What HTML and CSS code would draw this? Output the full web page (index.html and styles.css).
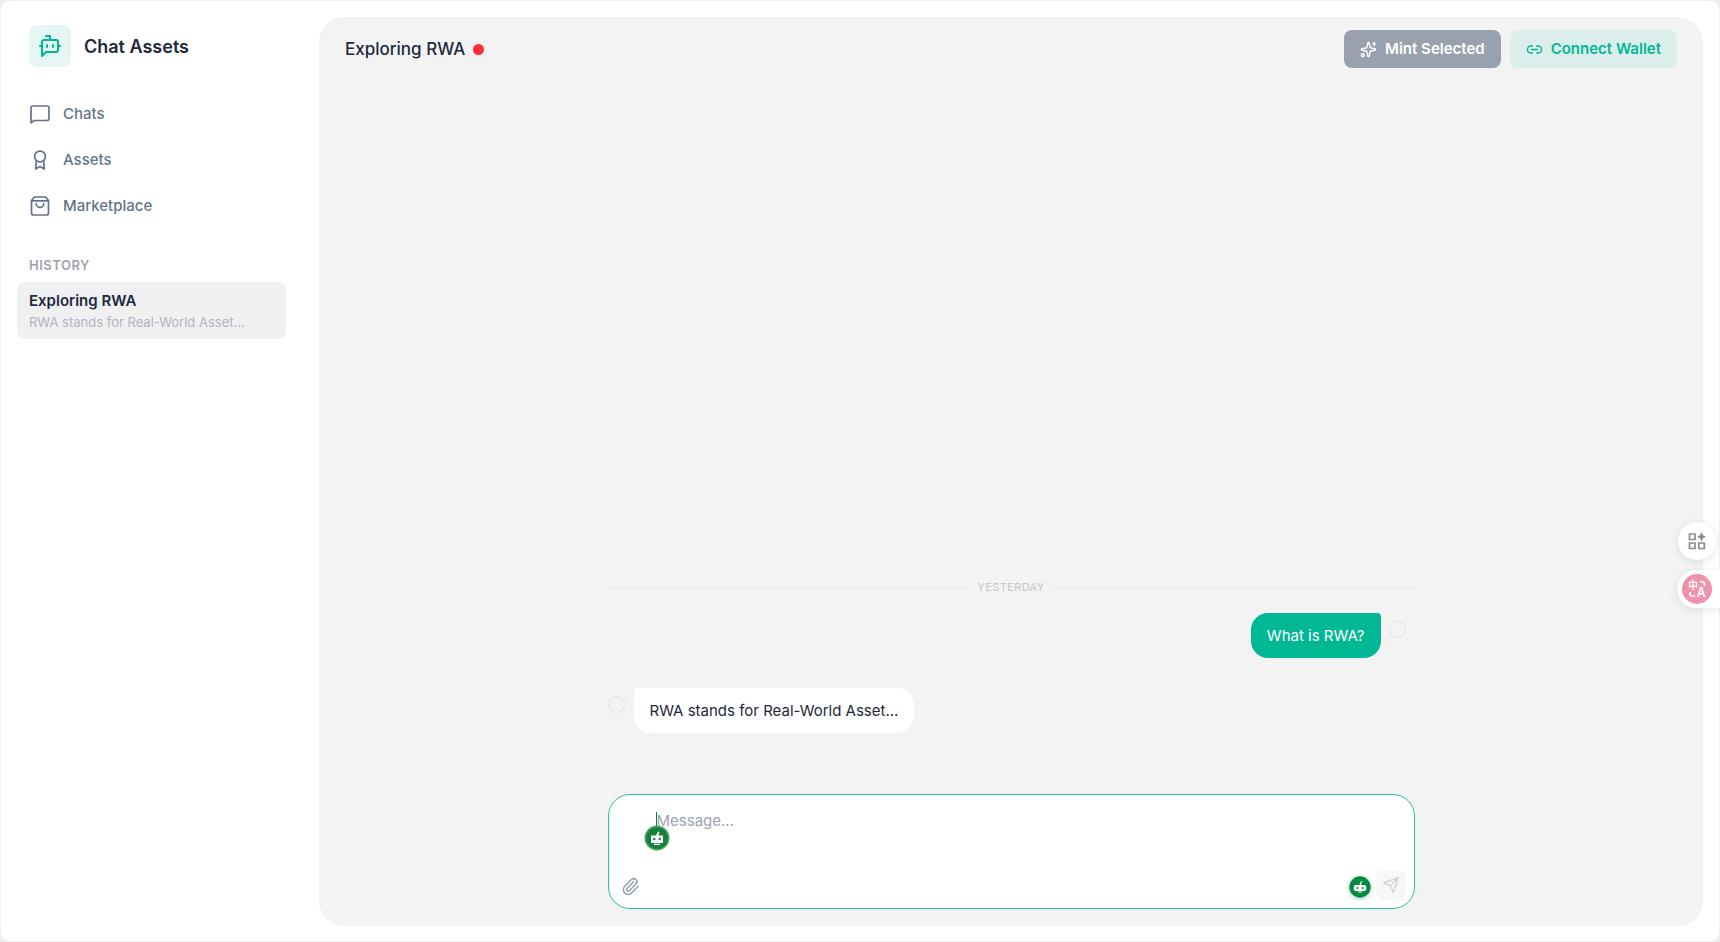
FILE: index.html
```html
<!DOCTYPE html>
<html lang="en">
<head>
<meta charset="utf-8">
<title>Chat Assets</title>
<link rel="stylesheet" href="styles.css">
</head>
<body>
<div class="app">
  <aside class="sidebar">
    <div class="brand">
      <span class="brand-tile">
        <svg class="icon" width="24" height="24" viewBox="0 0 24 24"><path d="M12 6V2H8"/><path d="m8 18-4 4V8a2 2 0 0 1 2-2h12a2 2 0 0 1 2 2v8a2 2 0 0 1-2 2Z"/><path d="M2 12h2M9 11v2M15 11v2M20 12h2"/></svg>
      </span>
      <span class="brand-name">Chat Assets</span>
    </div>
    <nav class="nav">
      <a class="nav-link" href="#chats">
        <svg class="icon" width="20" height="20" viewBox="0 0 20 20"><path d="M1 18.800V4a2 2 0 0 1 2-2h14a2 2 0 0 1 2 2v10.500a2 2 0 0 1-2 2H4z"/></svg>
        Chats
      </a>
      <a class="nav-link" href="#assets">
        <svg class="icon" width="20" height="20" viewBox="0 0 20 20"><circle cx="10" cy="6.500" r="5.400"/><path d="M6.300 11 5.700 19 10 16.500l4.300 2.500-.600-8"/></svg>
        Assets
      </a>
      <a class="nav-link" href="#marketplace">
        <svg class="icon" width="20" height="20" viewBox="0 0 20 20"><path d="M4.500 1h11L18.500 4.500V17a2 2 0 0 1-2 2h-13a2 2 0 0 1-2-2V4.500zM2 4.800h16"/><path d="M6.300 7.700a3.700 3.700 0 0 0 7.400 0"/></svg>
        Marketplace
      </a>
    </nav>
    <section class="history">
      <h2 class="history-heading">HISTORY</h2>
      <a class="history-item" href="#exploring-rwa">
        <span class="history-title">Exploring RWA</span>
        <span class="history-preview">RWA stands for Real-World Asset...</span>
      </a>
    </section>
  </aside>

  <main class="panel">
    <header class="panel-header">
      <h1 class="panel-title">Exploring RWA</h1>
      <span class="status-dot"></span>
      <div class="actions">
        <button class="button button-mint" type="button">
          <svg class="icon" width="17" height="17" viewBox="0 0 24 24"><path d="M11.017 2.814a1 1 0 0 1 1.966 0l1.051 5.558a2 2 0 0 0 1.594 1.594l5.558 1.051a1 1 0 0 1 0 1.966l-5.558 1.051a2 2 0 0 0-1.594 1.594l-1.051 5.558a1 1 0 0 1-1.966 0l-1.051-5.558a2 2 0 0 0-1.594-1.594l-5.558-1.051a1 1 0 0 1 0-1.966l5.558-1.051a2 2 0 0 0 1.594-1.594z"/><path d="M20 2v4M22 4h-4"/><circle cx="4" cy="20" r="2"/></svg>
          Mint Selected
        </button>
        <button class="button button-wallet" type="button">
          <svg class="icon" width="17" height="17" viewBox="0 0 24 24"><path d="M9 17H7A5 5 0 0 1 7 7h2M15 7h2a5 5 0 1 1 0 10h-2M8 12h8"/></svg>
          Connect Wallet
        </button>
      </div>
    </header>

    <div class="conversation">
      <div class="day"><span>YESTERDAY</span></div>
      <div class="message message-user">
        <p class="bubble">What is RWA?</p>
        <input class="pick" type="checkbox" aria-label="Select question">
      </div>
      <div class="message message-reply">
        <input class="pick" type="checkbox" aria-label="Select reply">
        <p class="bubble">RWA stands for Real-World Asset...</p>
      </div>
    </div>

    <form class="composer">
      <textarea class="composer-input" rows="2" aria-label="Message" placeholder="Message..."></textarea>
      <span class="caret">
        <svg class="bot-badge" width="26" height="26" viewBox="0 0 26 26"><circle cx="13" cy="13" r="12.500" fill="#4aa564"/><circle cx="13" cy="13" r="10.800" fill="#15803d"/><path fill="#fff" d="M12 10.500l2-4 1.500.800-1.300 3.200H19V18H7v-7.500zM10 18.800h6v1.200h-6z"/><circle cx="10.300" cy="14" r="1.200" fill="#15803d"/><circle cx="15.700" cy="14" r="1.200" fill="#15803d"/></svg>
      </span>
      <div class="composer-bar">
        <button class="attach" type="button" aria-label="Attach file">
          <svg class="icon" width="19" height="19" viewBox="0 0 24 24"><path d="m16 6-8.414 8.586a2 2 0 0 0 2.829 2.829l8.414-8.586a4 4 0 1 0-5.657-5.657l-8.379 8.551a6 6 0 1 0 8.485 8.485l8.379-8.551"/></svg>
        </button>
        <button class="bot-button" type="button" aria-label="Assistant">
          <svg width="22" height="22" viewBox="0 0 22 22"><circle cx="11" cy="11" r="10.700" fill="#008a45"/><path fill="#fff" d="M10.500 9 12 5l1.200.500L12 9h4.500v1.500h.800v3h-.8V15h-11v-1.500h-.8v-3h.8V9zM9 15.600h4v.800H9z"/><circle cx="8.300" cy="12" r="1" fill="#008a45"/><circle cx="13.700" cy="12" r="1" fill="#008a45"/></svg>
        </button>
        <button class="send" type="button" aria-label="Send">
          <svg class="icon" width="18" height="18" viewBox="0 0 24 24"><path d="m22 2-7 20-4-9-9-4ZM22 2 11 13"/></svg>
        </button>
      </div>
    </form>
  </main>
</div>

<div class="floating">
  <button class="float-grid" type="button" aria-label="Tools">
    <svg width="18" height="18" viewBox="0 0 18 18" fill="none" stroke="#8b8b93" stroke-width="1.700"><path d="M1.500 2h5.500v5.500h-5.500zM1.500 11h5.500v5.500h-5.500zM10.800 11h5.500v5.500h-5.500z"/><path d="M13.500 0l1.500 3.200 3 1.500-3 1.500-1.500 3.200-1.500-3.200-3-1.500 3-1.500z" fill="#8b8b93" stroke="none"/></svg>
  </button>
  <button class="float-translate" type="button" aria-label="Translate">
    <svg width="30" height="30" viewBox="0 0 30 30"><circle cx="15" cy="15" r="15" fill="#ef93ad"/><g fill="none" stroke="#fff" stroke-width="1.600"><path d="M18 8h2.500a2 2 0 0 1 2 2v2M8 18v2a2 2 0 0 0 2 2h3"/></g><text class="glyph-zh" x="6" y="15">中</text><text class="glyph-a" x="15" y="23">A</text></svg>
  </button>
</div>
</body>
</html>
```
FILE: styles.css
```css
* {
  box-sizing: border-box;
}

body {
  margin: 0;
  background: #ededee;
  color: #1e293b;
  font-family: Inter, "Liberation Sans", sans-serif;
  font-size: 15px;
  line-height: 24px;
}

h1, h2, p {
  margin: 0;
}

button {
  padding: 0;
  border: 0;
  background: none;
  font: inherit;
  cursor: pointer;
}

a {
  color: inherit;
  text-decoration: none;
}

svg {
  display: block;
  flex: none;
}

.icon {
  fill: none;
  stroke: currentColor;
  stroke-width: 2;
  stroke-linecap: round;
  stroke-linejoin: round;
}

.app {
  display: flex;
  min-height: 100vh;
  padding: 16px 16px 15px;
  border: 1px solid #f0f0f1;
  border-radius: 9px;
  background: #fff;
}

/* Sidebar */

.sidebar {
  flex: none;
  width: 269px;
  margin-right: 33px;
}

.brand {
  display: flex;
  align-items: center;
  gap: 13px;
  padding: 8px 12px 0;
}

.brand-tile {
  display: grid;
  place-items: center;
  width: 42px;
  height: 42px;
  border-radius: 8px;
  background: #e5f7f4;
  color: #00b894;
}

.brand-name {
  padding-top: 2px;
  font-size: 18px;
  font-weight: 600;
}

.nav {
  display: grid;
  gap: 4px;
  margin-top: 26px;
}

.nav-link {
  display: flex;
  align-items: center;
  gap: 13px;
  padding: 9px 13px;
  color: #64748b;
  font-weight: 500;
}

.nav-link .icon {
  stroke-width: 1.7;
}

.history {
  margin-top: 28px;
}

.history-heading {
  padding: 0 12px;
  color: #9ca3af;
  font-size: 13px;
  font-weight: 600;
  line-height: 20px;
  letter-spacing: 0.5px;
}

.history-item {
  display: grid;
  margin-top: 7px;
  padding: 8px 12px 7px;
  border-radius: 8px;
  background: #eff0f2;
}

.history-title {
  font-weight: 600;
  line-height: 22px;
}

.history-preview {
  color: #b0b5bf;
  font-size: 13px;
  line-height: 20px;
}

/* Main panel */

.panel {
  display: flex;
  flex: 1;
  flex-direction: column;
  border: 1px solid #f0f0f0;
  border-radius: 26px;
  background: #f3f3f3;
}

.panel-header {
  display: flex;
  align-items: center;
  padding: 12px 25px;
}

.panel-title {
  font-size: 17px;
  font-weight: 500;
}

.status-dot {
  width: 11px;
  height: 11px;
  margin-left: 8px;
  border-radius: 50%;
  background: #ff2b36;
}

.actions {
  display: flex;
  gap: 9px;
  margin-left: auto;
}

.button {
  display: flex;
  align-items: center;
  gap: 8px;
  height: 38px;
  padding: 0 16px;
  border-radius: 8px;
  font-weight: 600;
}

.button-mint {
  background: #99a1af;
  color: #fff;
}

.button-wallet {
  background: #dbeeeb;
  color: #00b894;
}

.conversation {
  display: flex;
  flex: 1;
  flex-direction: column;
  justify-content: flex-end;
  align-self: center;
  width: 100%;
  max-width: 807px;
  padding-bottom: 61px;
}

.day {
  display: flex;
  align-items: center;
  gap: 8px;
  color: #c3c7ce;
  font-size: 11px;
  line-height: 16px;
  letter-spacing: 0.4px;
}

.day::before,
.day::after {
  content: "";
  flex: 1;
  height: 1px;
  background: #e5e6e8;
}

.message {
  display: flex;
  align-items: flex-start;
  gap: 8px;
}

.message-user {
  justify-content: flex-end;
  margin-top: 18px;
  padding-right: 9px;
}

.message-reply {
  margin-top: 30px;
}

.bubble {
  padding: 10px 16px;
  border-radius: 17px;
  line-height: 25px;
}

.message-user .bubble {
  border-top-right-radius: 4px;
  background: #00b894;
  color: #fff;
}

.message-reply .bubble {
  margin-left: 1px;
  border-top-left-radius: 4px;
  background: #fff;
}

.pick {
  appearance: none;
  width: 17px;
  height: 17px;
  margin: 8px 0 0;
  border: 1px solid #dfe1e5;
  border-radius: 50%;
}

/* Composer */

.composer {
  position: relative;
  align-self: center;
  width: 100%;
  max-width: 807px;
  margin-bottom: 16px;
  padding: 13px 8px 8px 12px;
  border: 1px solid #26c0a4;
  border-radius: 22px;
  background: #fff;
}

.composer-input {
  display: block;
  width: 100%;
  height: 62px;
  padding: 1px 36px;
  border: 0;
  outline: 0;
  background: none;
  color: inherit;
  font: inherit;
  resize: none;
}

.composer-input::placeholder {
  color: #9ca3af;
}

.caret {
  position: absolute;
  top: 17px;
  left: 47px;
  width: 1px;
  height: 16px;
  background: #15803d;
}

.bot-badge {
  position: absolute;
  top: 13px;
  left: -12px;
}

.composer-bar {
  display: flex;
  align-items: center;
}

.attach {
  margin-top: 2px;
  margin-right: auto;
  color: #99a1af;
}

.bot-button {
  margin-top: 4px;
  margin-right: 5px;
  border-radius: 50%;
  box-shadow: 0 1px 4px rgb(0 0 0 / 25%);
}

.send {
  display: grid;
  place-items: center;
  width: 30px;
  height: 30px;
  border-radius: 8px;
  background: #f7f7f8;
  color: #d1d5db;
}

/* Floating tools */

.floating {
  position: fixed;
  top: 522px;
  right: 0;
  display: grid;
  gap: 10px;
}

.float-grid,
.float-translate {
  display: flex;
  align-items: center;
  height: 38px;
  background: #fff;
  box-shadow: 0 2px 10px rgb(0 0 0 / 10%);
}

.float-grid {
  justify-content: center;
  width: 38px;
  margin-left: 1px;
  border-radius: 50%;
}

.float-translate {
  width: 43px;
  padding-left: 5px;
  border-radius: 19px 0 0 19px;
}

.glyph-zh,
.glyph-a {
  fill: #fff;
  font-family: "Noto Sans CJK SC", sans-serif;
  font-weight: 700;
}

.glyph-zh {
  font-size: 10px;
}

.glyph-a {
  font-size: 13px;
}
```
